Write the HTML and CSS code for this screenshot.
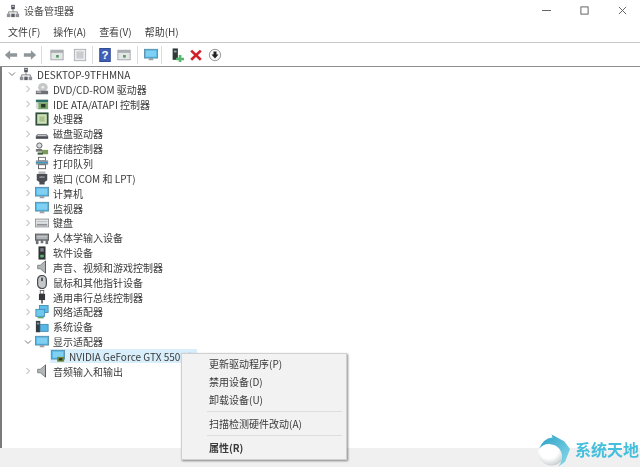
FILE: index.html
```html
<!DOCTYPE html>
<html lang="zh-CN">
<head>
<meta charset="utf-8">
<title>设备管理器</title>
<link rel="stylesheet" href="styles.css">
</head>
<body>
<svg class="defs" width="0" height="0" aria-hidden="true">
  <defs>
    <symbol id="pc" viewBox="0 0 16 16"><rect x="6" y="1" width="4" height="5" fill="#4a4f57"/><rect x="7" y="2" width="2" height="1.5" fill="#c9ccd0"/><path d="M8 6v3M3 11V9h10v2" stroke="#777" fill="none"/><rect x="1" y="11" width="4" height="4" fill="#8d9299"/><rect x="6" y="11" width="4" height="4" fill="#5c6168"/><rect x="11" y="11" width="4" height="4" fill="#8d9299"/></symbol>
    <symbol id="dvd" viewBox="0 0 16 16"><ellipse cx="9" cy="6" rx="5.500" ry="5" fill="#c4c6c8"/><ellipse cx="9" cy="6" rx="1.600" ry="1.400" fill="#eee"/><rect x="1" y="10" width="14" height="4" fill="#6d7176"/><rect x="2" y="11" width="5" height="1" fill="#e8e8e8"/></symbol>
    <symbol id="ide" viewBox="0 0 16 16"><rect x="1" y="3" width="14" height="3" fill="#2f6f6a"/><rect x="3" y="6" width="12" height="8" fill="#7aa86e"/><rect x="7" y="8" width="5" height="4" fill="#2c3a2c"/><rect x="1" y="7" width="3" height="6" fill="#d8d8d8"/></symbol>
    <symbol id="cpu" viewBox="0 0 16 16"><rect x="1.500" y="1.500" width="13" height="13" fill="#cfe0b8" stroke="#2f4f3a" stroke-width="2"/><rect x="5" y="5" width="6" height="6" fill="#a7c28c"/></symbol>
    <symbol id="disk" viewBox="0 0 16 16"><path d="M3 8h10l2 2v3H1v-3z" fill="#7d8186"/><rect x="1" y="11" width="14" height="2.400" fill="#4c5056"/><rect x="3" y="9" width="10" height="1" fill="#d7d9db"/></symbol>
    <symbol id="storage" viewBox="0 0 16 16"><circle cx="5" cy="4" r="3" fill="#d9dcdf" stroke="#555"/><rect x="1" y="8" width="7" height="3" fill="#777"/><rect x="8" y="9" width="7" height="5" fill="#7b9a5c"/><rect x="3" y="12" width="6" height="2.500" fill="#3f5f3f"/></symbol>
    <symbol id="printer" viewBox="0 0 16 16"><rect x="4" y="1.500" width="8" height="4" fill="#fff" stroke="#666"/><rect x="1" y="5" width="14" height="5" fill="#8d97a0"/><rect x="1" y="7" width="14" height="1.200" fill="#2b9ac9"/><rect x="4" y="10" width="8" height="4.500" fill="#fff" stroke="#555"/></symbol>
    <symbol id="port" viewBox="0 0 16 16"><rect x="4" y="0.500" width="8" height="3" fill="#b8babc"/><path d="M2 3.500h12v7l-3 2v3H5v-3l-3-2z" fill="#494c50"/><rect x="5" y="6" width="6" height="2" fill="#898c90"/></symbol>
    <symbol id="monitor" viewBox="0 0 16 16"><rect x="0.500" y="1.500" width="15" height="10" fill="#4bb3e6" stroke="#5a8fa8"/><rect x="2" y="3" width="12" height="7" fill="#7fd0f2"/><path d="M5 14h6l-1-2.500H6z" fill="#99a2a8"/></symbol>
    <symbol id="keyboard" viewBox="0 0 16 16"><rect x="0.500" y="3.500" width="15" height="9" fill="#e3e5e7" stroke="#8d9195"/><rect x="2" y="9" width="12" height="2" fill="#8d9195"/><rect x="2" y="6" width="12" height="1" fill="#b5b8bb"/></symbol>
    <symbol id="hid" viewBox="0 0 16 16"><rect x="0.500" y="3.500" width="15" height="7" fill="#8b9096" stroke="#555"/><path d="M2 6h12M2 8h12" stroke="#e0e2e4"/><rect x="1" y="10" width="3" height="5" fill="#6c7076"/><rect x="12" y="10" width="3" height="5" fill="#6c7076"/><rect x="6.500" y="10" width="3" height="4" fill="#6c7076"/></symbol>
    <symbol id="soft" viewBox="0 0 16 16"><rect x="4" y="0.500" width="8" height="15" fill="#2e3236"/><rect x="6" y="2.500" width="4" height="4" fill="#7c8085"/><rect x="6" y="10" width="4" height="3" fill="#5bb56a"/></symbol>
    <symbol id="sound" viewBox="0 0 16 16"><path d="M3 6h3l6-5v14l-6-5H3z" fill="#b2b6b9" stroke="#7b7f83"/><path d="M12 1v14" stroke="#55595d"/></symbol>
    <symbol id="mouse" viewBox="0 0 16 16"><rect x="3" y="0.500" width="10" height="15" rx="5" fill="#c5c8cb" stroke="#4a4e52" stroke-width="1.400"/><rect x="7" y="3" width="2" height="4" fill="#4a4e52"/></symbol>
    <symbol id="usb" viewBox="0 0 16 16"><rect x="6" y="0.500" width="4" height="4" fill="none" stroke="#666"/><rect x="4.500" y="4.500" width="7" height="7" fill="#33373b"/><path d="M8 11.500v4" stroke="#666" stroke-width="2"/></symbol>
    <symbol id="net" viewBox="0 0 16 16"><rect x="5" y="0.500" width="10" height="8" fill="#5fbde9" stroke="#3f8fb5"/><rect x="1" y="5" width="10" height="8" fill="#6fc8ee" stroke="#3f8fb5"/><path d="M3 14.500h7" stroke="#5aa85f" stroke-width="1.500"/></symbol>
    <symbol id="sys" viewBox="0 0 16 16"><rect x="1" y="1" width="5" height="13" fill="#333c44"/><rect x="2" y="3" width="3" height="2" fill="#8a9095"/><rect x="6" y="5" width="9" height="8" fill="#55b7e6" stroke="#3f8fb5"/></symbol>
    <symbol id="gpu" viewBox="0 0 16 16"><rect x="0.500" y="1.500" width="15" height="10" fill="#4bb3e6" stroke="#5a8fa8"/><rect x="2" y="3" width="12" height="7" fill="#7fd0f2"/><rect x="7" y="9" width="8" height="5.500" fill="#6f8a3a"/><rect x="9" y="10.500" width="4" height="2.500" fill="#2f3a1d"/></symbol>
    <symbol id="win" viewBox="0 0 16 16"><rect x="1" y="2.500" width="14" height="11" fill="#e4e6e8" stroke="#9ea2a6"/><rect x="1" y="2.500" width="14" height="3" fill="#a9adb1"/><rect x="7" y="8" width="3" height="3" fill="#4c9a5c"/></symbol>
    <symbol id="closed" viewBox="0 0 8 8"><path d="M2.500 1L5.500 4 2.500 7" stroke="#aaa" fill="none"/></symbol>
    <symbol id="open" viewBox="0 0 8 8"><path d="M1 2.500L4 5.500 7 2.500" stroke="#777" fill="none"/></symbol>
    <radialGradient id="ball" cx="0.400" cy="0.400" r="0.700"><stop offset="0.500" stop-color="#ffffff"/><stop offset="1" stop-color="#b9c2c5"/></radialGradient>
    <linearGradient id="swoosh" x1="0" y1="0" x2="1" y2="1"><stop offset="0" stop-color="#2b9fc4"/><stop offset="1" stop-color="#8adcec"/></linearGradient>
  </defs>
</svg>

<div class="app">
  <header class="titlebar">
    <svg class="ico title-ico"><use href="#pc"/></svg>
    <span class="title">设备管理器</span>
    <div class="winbtns">
      <svg class="wb" viewBox="0 0 10 10"><path d="M0 5h10" stroke="#555"/></svg>
      <svg class="wb" viewBox="0 0 10 10"><rect x="1" y="1" width="8" height="8" fill="none" stroke="#555"/></svg>
      <svg class="wb" viewBox="0 0 10 10"><path d="M1 1l8 8M9 1l-8 8" stroke="#555"/></svg>
    </div>
  </header>

  <nav class="menubar">
    <span>文件(F)</span><span>操作(A)</span><span>查看(V)</span><span>帮助(H)</span>
  </nav>

  <div class="toolbar">
    <svg class="tb" viewBox="0 0 16 16"><path d="M1 8l6-5.500V6h8v4H7v3.500z" fill="#8f979b"/></svg>
    <svg class="tb" viewBox="0 0 16 16"><path d="M15 8L9 2.500V6H1v4h8v3.500z" fill="#8f979b"/></svg>
    <i class="sep s1"></i>
    <svg class="tb"><use href="#win"/></svg>
    <svg class="tb t2" viewBox="0 0 16 16"><rect x="1.500" y="1.500" width="13" height="13" fill="#e9ebed" stroke="#a8acb0"/><rect x="4" y="4" width="8" height="8" fill="#c9cdd1"/></svg>
    <i class="sep s2"></i>
    <svg class="tb" viewBox="0 0 16 16"><rect x="2" y="0.500" width="12" height="15" fill="#3f5fb8" stroke="#27418c"/><text class="q" x="8" y="12.500" text-anchor="middle">?</text></svg>
    <svg class="tb"><use href="#win"/></svg>
    <i class="sep s3"></i>
    <svg class="tb"><use href="#monitor"/></svg>
    <i class="sep s4"></i>
    <svg class="tb" viewBox="0 0 16 16"><rect x="3" y="0.500" width="6" height="13" fill="#2f3a38"/><rect x="4.500" y="3" width="3" height="2" fill="#9aa"/><path d="M7 11h3V8h3v3h3v3h-3v2h-3v-2H7z" fill="#56b870"/></svg>
    <svg class="tb" viewBox="0 0 16 16"><path d="M2.500 3l11 10.500M13.500 3l-11 10.500" stroke="#d3202a" stroke-width="3"/></svg>
    <svg class="tb" viewBox="0 0 16 16"><circle cx="8" cy="8" r="6.500" fill="#fafafa" stroke="#8c8c8c"/><path d="M6.300 4h3.400v3.500H12L8 12 4 7.500h2.300z" fill="#222"/></svg>
  </div>

  <main class="tree">
    <div class="row root"><svg class="tw"><use href="#open"/></svg><svg class="ico"><use href="#pc"/></svg><span>DESKTOP-9TFHMNA</span></div>
    <div class="row"><svg class="tw"><use href="#closed"/></svg><svg class="ico"><use href="#dvd"/></svg><span>DVD/CD-ROM 驱动器</span></div>
    <div class="row"><svg class="tw"><use href="#closed"/></svg><svg class="ico"><use href="#ide"/></svg><span>IDE ATA/ATAPI 控制器</span></div>
    <div class="row"><svg class="tw"><use href="#closed"/></svg><svg class="ico"><use href="#cpu"/></svg><span>处理器</span></div>
    <div class="row"><svg class="tw"><use href="#closed"/></svg><svg class="ico"><use href="#disk"/></svg><span>磁盘驱动器</span></div>
    <div class="row"><svg class="tw"><use href="#closed"/></svg><svg class="ico"><use href="#storage"/></svg><span>存储控制器</span></div>
    <div class="row"><svg class="tw"><use href="#closed"/></svg><svg class="ico"><use href="#printer"/></svg><span>打印队列</span></div>
    <div class="row"><svg class="tw"><use href="#closed"/></svg><svg class="ico"><use href="#port"/></svg><span>端口 (COM 和 LPT)</span></div>
    <div class="row"><svg class="tw"><use href="#closed"/></svg><svg class="ico"><use href="#monitor"/></svg><span>计算机</span></div>
    <div class="row"><svg class="tw"><use href="#closed"/></svg><svg class="ico"><use href="#monitor"/></svg><span>监视器</span></div>
    <div class="row"><svg class="tw"><use href="#closed"/></svg><svg class="ico"><use href="#keyboard"/></svg><span>键盘</span></div>
    <div class="row"><svg class="tw"><use href="#closed"/></svg><svg class="ico"><use href="#hid"/></svg><span>人体学输入设备</span></div>
    <div class="row"><svg class="tw"><use href="#closed"/></svg><svg class="ico"><use href="#soft"/></svg><span>软件设备</span></div>
    <div class="row"><svg class="tw"><use href="#closed"/></svg><svg class="ico"><use href="#sound"/></svg><span>声音、视频和游戏控制器</span></div>
    <div class="row"><svg class="tw"><use href="#closed"/></svg><svg class="ico"><use href="#mouse"/></svg><span>鼠标和其他指针设备</span></div>
    <div class="row"><svg class="tw"><use href="#closed"/></svg><svg class="ico"><use href="#usb"/></svg><span>通用串行总线控制器</span></div>
    <div class="row"><svg class="tw"><use href="#closed"/></svg><svg class="ico"><use href="#net"/></svg><span>网络适配器</span></div>
    <div class="row"><svg class="tw"><use href="#closed"/></svg><svg class="ico"><use href="#sys"/></svg><span>系统设备</span></div>
    <div class="row"><svg class="tw"><use href="#open"/></svg><svg class="ico"><use href="#monitor"/></svg><span>显示适配器</span></div>
    <div class="row child"><div class="sel"><svg class="ico"><use href="#gpu"/></svg><span>NVIDIA GeForce GTX 550 Ti</span></div></div>
    <div class="row"><svg class="tw"><use href="#closed"/></svg><svg class="ico"><use href="#sound"/></svg><span>音频输入和输出</span></div>
  </main>

  <footer class="status"></footer>
</div>

<div class="ctx">
  <div class="item">更新驱动程序(P)</div>
  <div class="item">禁用设备(D)</div>
  <div class="item">卸载设备(U)</div>
  <hr>
  <div class="item">扫描检测硬件改动(A)</div>
  <hr>
  <div class="item bold">属性(R)</div>
</div>

<div class="mark">
  <svg class="mark-logo" viewBox="0 0 34 33"><circle cx="15" cy="18" r="14" fill="url(#ball)"/><path d="M2 15Q6 4 16 3l-1-3 13 7 6 8-5 13-7 5q6-8 3-15-3-7-11-8-7-1-12 5z" fill="url(#swoosh)"/></svg>
  <span class="mark-text">系统天地</span>
</div>
```

FILE: styles.css
```css
html, body {
  margin: 0;
  padding: 0;
  width: 640px;
  height: 467px;
  overflow: hidden;
  background: #fff;
}
body {
  font-family: "Noto Sans CJK SC", "Liberation Sans", sans-serif;
  font-size: 10px;
  color: #3a3a3a;
  position: relative;
}
.defs { display: block; height: 0; }
.app {
  display: flex;
  flex-direction: column;
  height: 467px;
  filter: blur(0.3px);
}
.titlebar {
  display: flex;
  align-items: center;
  height: 21px;
  padding-left: 6px;
}
.title-ico { margin-right: 3px; }
.title { color: #4a4a4a; }
.winbtns {
  margin-left: auto;
  display: flex;
  gap: 29px;
  padding-right: 13px;
}
.wb { width: 9px; height: 9px; display: block; }
.menubar {
  display: flex;
  gap: 13px;
  align-items: center;
  height: 21px;
  padding-left: 8px;
  font-size: 10px;
  border-bottom: 1px solid #c8c8c8;
}
.toolbar {
  display: flex;
  align-items: center;
  height: 23px;
  padding-left: 1.5px;
  border-bottom: 1px solid #8e8e8e;
}
.tb { width: 14px; height: 14px; margin: 0 2.5px; display: block; flex: none; }
.t2 { margin-left: 6.5px; }
.sep { display: block; width: 1px; height: 18px; background: #dcdcdc; flex: none; }
.s1 { margin: 0 5.5px 0 1px; }
.s2 { margin: 0 2.5px 0 2.5px; }
.s3 { margin: 0 3px 0 4px; }
.s4 { margin: 0 5.5px 0 0.5px; }
.q { font: bold 13px "Liberation Sans", sans-serif; fill: #fff; }
.tree {
  flex: 1;
  border-left: 2px solid #7b7b7b;
  overflow: hidden;
}
.row {
  display: flex;
  align-items: center;
  height: 14.85px;
  padding-left: 22px;
  white-space: nowrap;
}
.row.root { padding-left: 6px; }
.row.child { padding-left: 48px; }
.tw { width: 8px; height: 8px; flex: none; margin-right: 3px; }
.ico { width: 14px; height: 14px; flex: none; margin-right: 4px; display: block; }
.sel {
  display: flex;
  align-items: center;
  background: #d9eefb;
  width: 147px;
  height: 14px;
  padding-left: 1px;
  box-sizing: border-box;
  white-space: nowrap;
  overflow: hidden;
}
.status {
  height: 19px;
  background: #f0f0f0;
  flex: none;
}
.ctx {
  position: absolute;
  left: 181px;
  top: 353px;
  width: 166px;
  height: 107px;
  box-sizing: border-box;
  background: #f2f2f2;
  border: 1px solid #d0d0d0;
  box-shadow: 1px 1px 2px rgba(0,0,0,.45);
  padding: 1px 0 0 27px;
  font-size: 10px;
  filter: blur(0.3px);
}
.ctx .item { height: 18px; line-height: 18px; }
.ctx hr {
  border: 0;
  border-top: 1px solid #dedede;
  margin: 2px 4px 3px -2px;
}
.ctx .bold { font-weight: 700; }
.mark {
  position: absolute;
  left: 537px;
  top: 434px;
  display: flex;
  align-items: flex-start;
  gap: 5px;
  color: #45bfdc;
  font-weight: 700;
  font-size: 16px;
  white-space: nowrap;
}
.mark-logo { width: 33px; height: 33px; display: block; }
.mark-text { line-height: 20px; margin-top: 5px; }
```
